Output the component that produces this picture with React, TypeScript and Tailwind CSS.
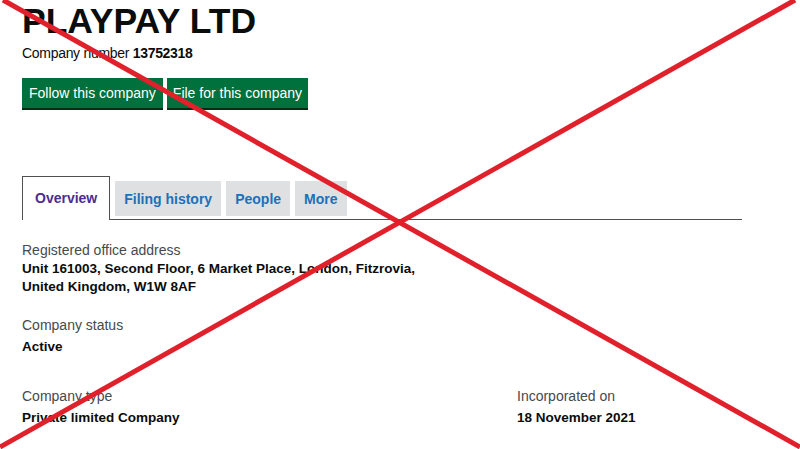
export default function App() {
  const tabs = ['Filing history', 'People', 'More'];

  return (
    <div className="relative w-[800px] h-[449px] overflow-hidden bg-white font-['Liberation_Sans',Arial,sans-serif] text-[#0b0c0c]">
      <div className="pl-[22px] pt-[4px] w-[742px]">
        {/* Heading */}
        <h1 className="text-[35.5px] leading-[35px] font-bold">PLAYPAY LTD</h1>
        <p className="mt-[4px] text-[14px] leading-5 tracking-[-0.3px]">
          Company number <strong className="font-bold">13752318</strong>
        </p>

        {/* Buttons */}
        <div className="mt-[15px] flex gap-[4px]">
          <button className="h-[30px] px-[7px] bg-[#00703c] text-white text-[14px] leading-[30px] shadow-[0_2px_0_#002d18]">
            Follow this company
          </button>
          <button className="h-[30px] px-[6px] bg-[#00703c] text-white text-[14px] leading-[30px] shadow-[0_2px_0_#002d18]">
            File for this company
          </button>
        </div>

        {/* Tabs */}
        <div className="mt-[68px] flex items-end gap-[5px] border-b border-[#505050]">
          <div className="-mb-px bg-white border border-b-0 border-[#505050] px-[12px] pt-[11px] pb-[12px] text-[14px] leading-5 font-bold text-[#4c2c92]">
            Overview
          </div>
          {tabs.map((tab) => (
            <div
              key={tab}
              className="mb-[3px] h-[35px] flex items-center px-[9px] bg-[#dee0e2] text-[14px] leading-5 font-bold text-[#1d70b8]"
            >
              {tab}
            </div>
          ))}
        </div>

        {/* Details */}
        <div className="mt-[20px]">
          <p className="text-[14px] leading-5 text-[#454a4c]">Registered office address</p>
          <p className="text-[13.5px] leading-[18px] font-bold">
            Unit 161003, Second Floor, 6 Market Place, London, Fitzrovia,
            <br />
            United Kingdom, W1W 8AF
          </p>
        </div>

        <div className="mt-[19px]">
          <p className="text-[14px] leading-5 text-[#454a4c]">Company status</p>
          <p className="mt-[2px] text-[13.5px] leading-[19px] font-bold">Active</p>
        </div>

        <div className="mt-[30px] flex">
          <div className="w-[495px]">
            <p className="text-[14px] leading-5 text-[#454a4c]">Company type</p>
            <p className="mt-[2px] text-[13.5px] leading-[19px] font-bold">Private limited Company</p>
          </div>
          <div>
            <p className="text-[14px] leading-5 text-[#454a4c]">Incorporated on</p>
            <p className="mt-[2px] text-[13.5px] leading-[19px] font-bold">18 November 2021</p>
          </div>
        </div>
      </div>

      {/* Red cross overlay */}
      <svg className="absolute inset-0 pointer-events-none" width="800" height="449" viewBox="0 0 800 449">
        <line x1="3" y1="0" x2="800" y2="447" stroke="#e0202b" strokeWidth="5" />
        <line x1="795" y1="0" x2="0" y2="447" stroke="#e0202b" strokeWidth="5" />
      </svg>
    </div>
  );
}
